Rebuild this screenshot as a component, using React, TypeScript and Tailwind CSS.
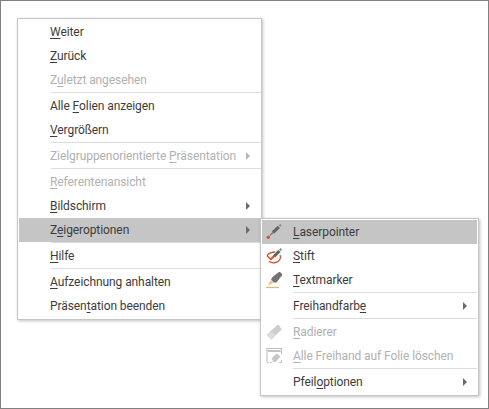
import React from "react";

const Arrow = ({ off }: { off?: boolean }) => (
  <svg width="4" height="8" viewBox="0 0 4 8" className="shrink-0">
    <path d="M0 0L4 4L0 8Z" fill={off ? "#b8b8b8" : "#6a6a6a"} />
  </svg>
);

const Sep = () => <div className="h-[2px] ml-[32px] border-t border-[#dcdcdc]" />;
const SubSep = () => <div className="h-[2px] ml-[31px] border-t border-[#dcdcdc]" />;

type RowProps = {
  children: React.ReactNode;
  off?: boolean;
  active?: boolean;
  arrow?: boolean;
};

const Row = ({ children, off, active, arrow }: RowProps) => (
  <div
    className={`flex items-center h-[24px] pl-[31px] pr-[11px] ${active ? "bg-[#c5c5c5]" : ""} ${off ? "text-[#b1b1b1]" : "text-[#3c3c3c]"}`}
  >
    <span className="flex-1 whitespace-nowrap">{children}</span>
    {arrow && <Arrow off={off} />}
  </div>
);

const SubRow = ({ children, off, active, arrow, icon }: RowProps & { icon?: React.ReactNode }) => (
  <div
    className={`flex items-center h-[24px] pr-[10px] ${active ? "bg-[#c5c5c5]" : ""} ${off ? "text-[#b1b1b1]" : "text-[#3c3c3c]"}`}
  >
    <span className="w-[31px] shrink-0 pl-[4px] flex items-center">{icon}</span>
    <span className="flex-1 whitespace-nowrap">{children}</span>
    {arrow && <Arrow off={off} />}
  </div>
);

const Laser = () => (
  <svg width="20" height="20" viewBox="0 0 20 20">
    <path d="M4 13.5L7.5 10" stroke="#7a7a7a" strokeWidth="1.3" fill="none" />
    <path d="M7 10.5L12.8 4.8" stroke="#666666" strokeWidth="3.2" fill="none" />
    <path d="M13.5 4L15 2.5" stroke="#8a8a8a" strokeWidth="2" fill="none" />
    <circle cx="2.3" cy="15.3" r="1.7" fill="#e2502f" />
  </svg>
);

const Pen = () => (
  <svg width="20" height="20" viewBox="0 0 20 20">
    <path d="M1 9.5C3 7.2 6 6 9 6" stroke="#dc4f2e" strokeWidth="1.3" fill="none" />
    <path d="M1 9.5L5 13.8" stroke="#dc4f2e" strokeWidth="1.3" fill="none" />
    <path d="M3 15.3C6 18 12 17.2 14 13.2C15 11.2 14.6 10 14 9" stroke="#dc4f2e" strokeWidth="1.3" fill="none" />
    <path d="M4.5 13.5L8.5 9.8" stroke="#dc4f2e" strokeWidth="2.2" fill="none" />
    <path d="M8 10.5L13.5 4.8" stroke="#666666" strokeWidth="3.2" fill="none" />
    <path d="M14 4.2L15.3 2.8" stroke="#8a8a8a" strokeWidth="2" fill="none" />
  </svg>
);

const Marker = () => (
  <svg width="20" height="20" viewBox="0 0 20 20">
    <path d="M6.5 7L12.5 2.2Q13.5 1.6 14.3 2.3L15.8 3.8Q16.5 4.6 15.9 5.5L10.5 12.5H7.8L5 9.8Z" fill="#727272" />
    <path d="M4.7 10.3L7.5 13L1.5 15.8Z" fill="#f0c488" />
    <path d="M0 17.5H13" stroke="#e8b36a" strokeWidth="1.2" fill="none" />
  </svg>
);

const Eraser = () => (
  <svg width="20" height="20" viewBox="0 0 20 20">
    <path d="M12 3L1 13L5.5 17L15.3 7.3Z" fill="#cdcdcd" stroke="#cdcdcd" strokeWidth="1" strokeLinejoin="round" />
    <path d="M4.8 9.6L1 13L5.5 17L9 13.4Z" fill="#dcdcdc" stroke="#dcdcdc" strokeWidth="1" strokeLinejoin="round" />
  </svg>
);

const Clear = () => (
  <svg width="20" height="20" viewBox="0 0 20 20">
    <path d="M1 16V2.5H15.5V8" stroke="#bdbdbd" strokeWidth="1.1" fill="none" />
    <path d="M1 16.5H6.5" stroke="#c4c4c4" strokeWidth="1.1" strokeDasharray="2 1" fill="none" />
    <path d="M13 16.5H15.5V14" stroke="#c4c4c4" strokeWidth="1.1" fill="none" />
    <path d="M2 5H14.5" stroke="#bdbdbd" strokeWidth="1.8" fill="none" />
    <path d="M5.5 12.5L10.5 7.5L14.5 10.5L9.5 16H7.5Z" fill="#c6c6c6" />
  </svg>
);

export default function App() {
  return (
    <div className="w-[489px] h-[409px] bg-white border border-[#808080] pt-[17px] pl-[16px] text-[12px] tracking-[-0.08px] leading-[16px] overflow-hidden [font-family:Roboto,sans-serif] [&_u]:underline-offset-2">
      <div className="relative w-[245px] bg-white border border-[#c6c6c6] py-px pl-px shadow-[1px_1px_3px_rgba(0,0,0,0.25)]">
        <Row><u>W</u>eiter</Row>
        <Row><u>Z</u>urück</Row>
        <Row off>Z<u>u</u>letzt angesehen</Row>
        <Sep />
        <Row>Alle <u>F</u>olien anzeigen</Row>
        <Row><u>V</u>ergrößern</Row>
        <Sep />
        <Row off arrow>Zielgruppenorientierte <u>P</u>räsentation</Row>
        <Sep />
        <Row off><u>R</u>eferentenansicht</Row>
        <Row arrow><u>B</u>ildschirm</Row>
        <Row active arrow>Z<u>e</u>igeroptionen</Row>
        <Sep />
        <Row><u>H</u>ilfe</Row>
        <Sep />
        <Row><u>A</u>ufzeichnung anhalten</Row>
        <Row>Präsen<u>t</u>ation beenden</Row>

        <div className="absolute left-[242px] top-[199px] w-[219px] bg-white border border-[#c6c6c6] p-px shadow-[1px_1px_3px_rgba(0,0,0,0.25)]">
          <SubRow active icon={<Laser />}><u>L</u>aserpointer</SubRow>
          <SubRow icon={<Pen />}><u>S</u>tift</SubRow>
          <SubRow icon={<Marker />}><u>T</u>extmarker</SubRow>
          <SubSep />
          <SubRow arrow>Freihandfarb<u>e</u></SubRow>
          <SubSep />
          <SubRow off icon={<Eraser />}><u>R</u>adierer</SubRow>
          <SubRow off icon={<Clear />}><u>A</u>lle Freihand auf Folie löschen</SubRow>
          <SubSep />
          <SubRow arrow>Pfeil<u>o</u>ptionen</SubRow>
        </div>
      </div>
    </div>
  );
}
